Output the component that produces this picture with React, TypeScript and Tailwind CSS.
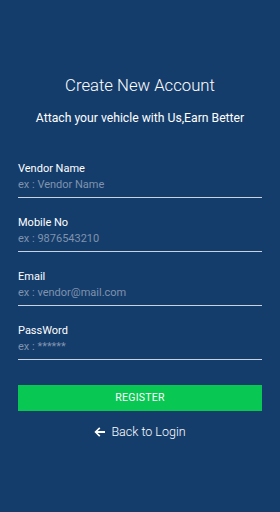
import React from 'react';

const fields = [
    { label: 'Vendor Name', placeholder: 'ex : Vendor Name' },
    { label: 'Mobile No', placeholder: 'ex : 9876543210' },
    { label: 'Email', placeholder: 'ex : vendor@mail.com' },
    { label: 'PassWord', placeholder: 'ex : ******' },
];

export default function App() {
    return (
        <div className="w-[280px] h-[512px] bg-[#153d6c] text-white font-['Roboto',sans-serif] flex flex-col px-[18px]">
            {/* Header */}
            <h1 className="mt-[75px] text-center text-[16.7px] leading-[22px] font-light">Create New Account</h1>
            <p className="mt-[13px] text-center text-[12.2px] leading-[16px]">
                Attach your vehicle with Us,Earn Better
            </p>

            {/* Form */}
            <div className="mt-[36px] flex flex-col gap-[18px]">
                {fields.map((f) => (
                    <div key={f.label} className="flex flex-col">
                        <label className="text-[11px] leading-[14px] text-white">{f.label}</label>
                        <input
                            placeholder={f.placeholder}
                            className="h-[22px] pb-[5px] text-[11px] bg-transparent outline-none border-b-[1.5px] border-[#c9d3e0] placeholder:text-[#7f93ad] text-white"
                        />
                    </div>
                ))}
            </div>

            <button className="mt-[25px] h-[26px] bg-[#08c853] text-[10.5px] text-white tracking-wide">REGISTER</button>

            <button className="mt-[12px] flex items-center justify-center gap-[5px] text-[12.5px] font-light text-white">
                <svg width="12" height="12" viewBox="0 0 12 12" fill="currentColor">
                    <path d="M5.2 1.2 L6.4 2.4 L3.6 5.1 H11 V6.9 H3.6 L6.4 9.6 L5.2 10.8 L0.4 6 Z" />
                </svg>
                Back to Login
            </button>
        </div>
    );
}
